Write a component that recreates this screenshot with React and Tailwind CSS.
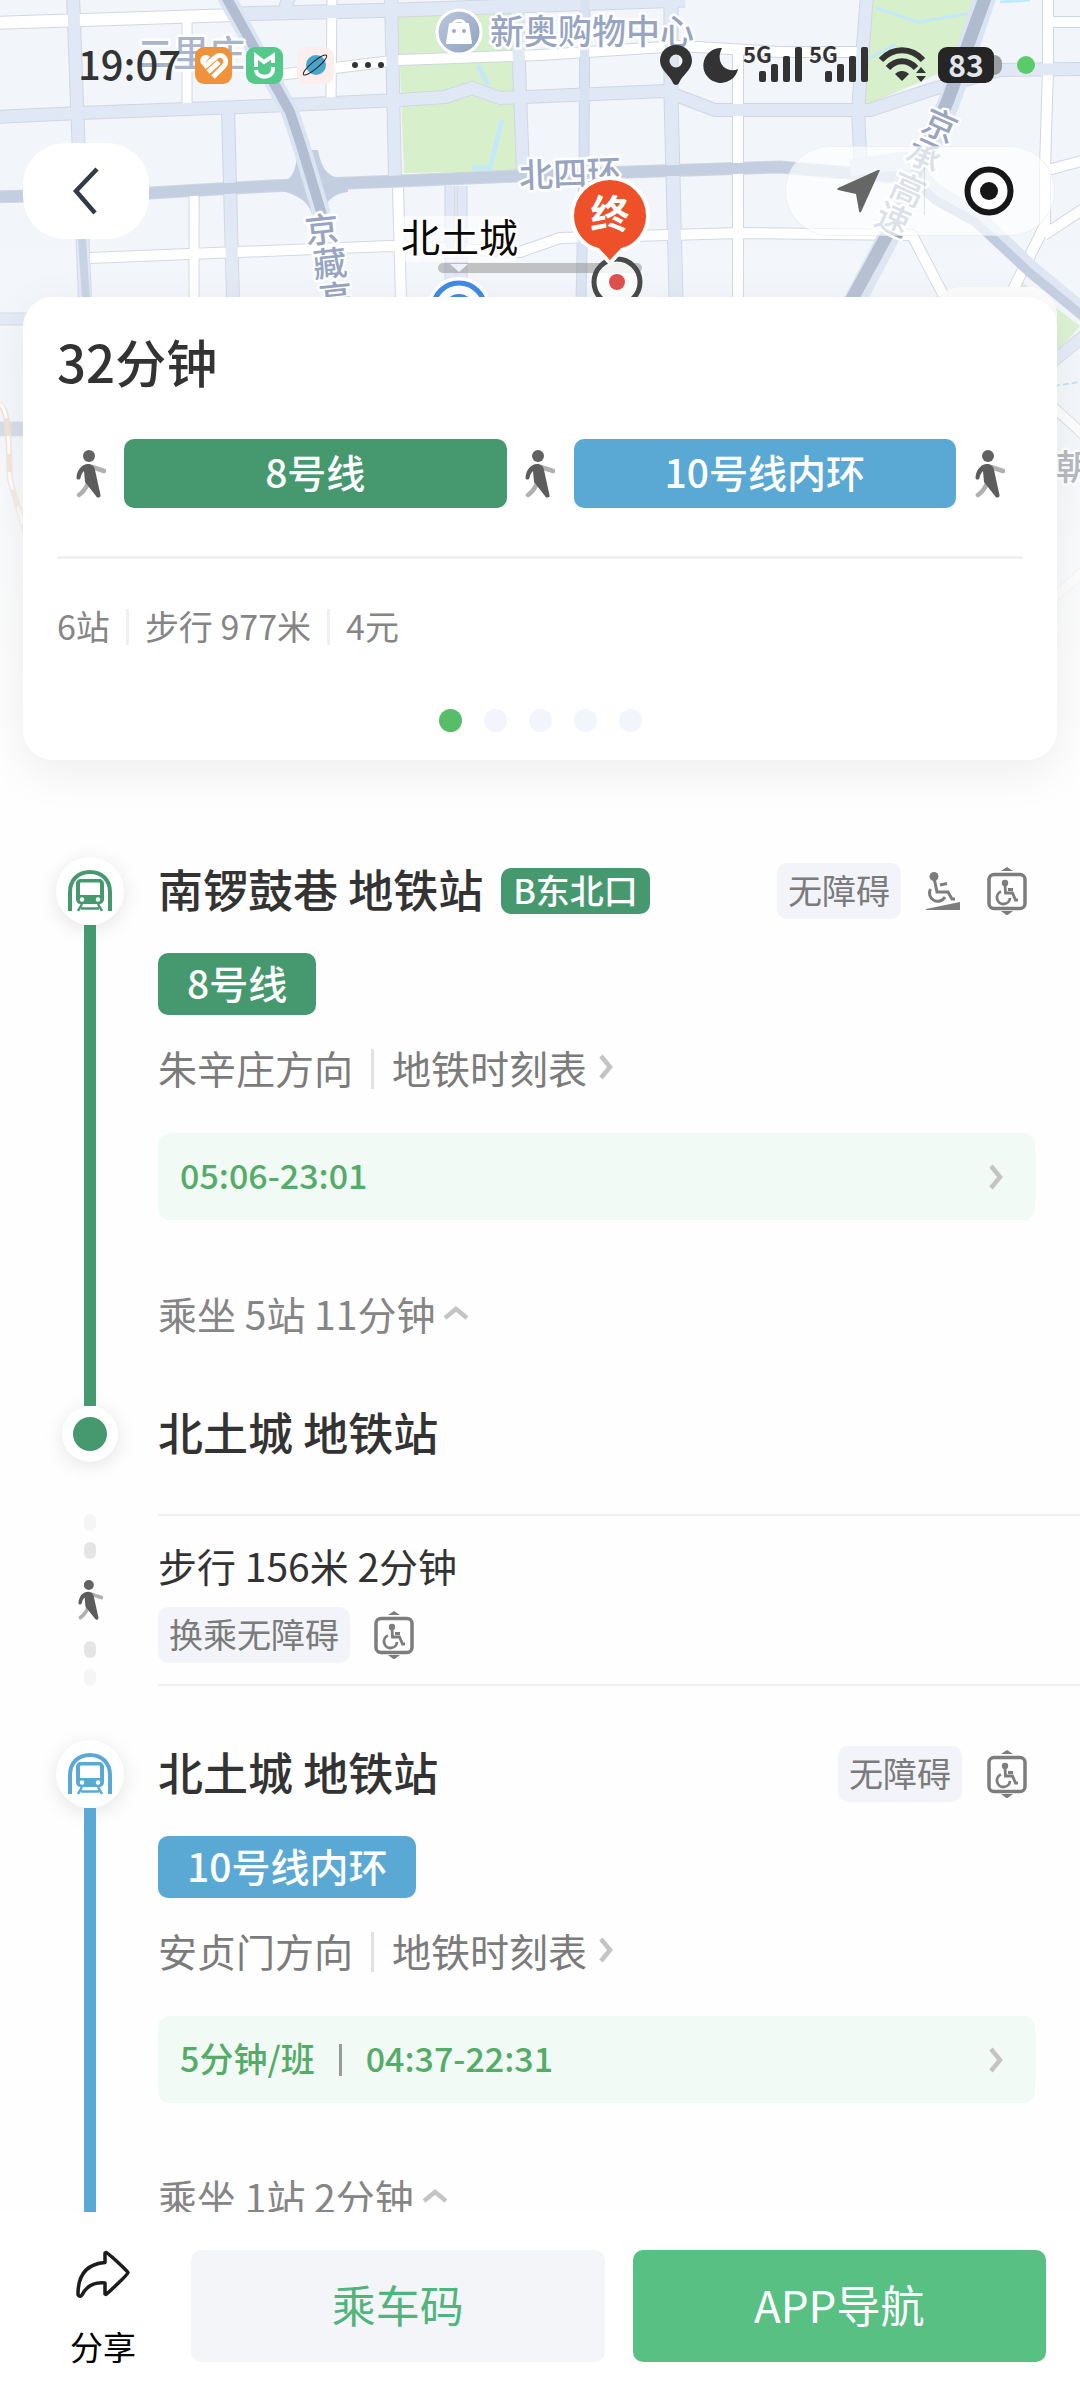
import clsx from "clsx";

const legs = [
    {
        id: "line-8",
        station: "南锣鼓巷 地铁站",
        exit: "B东北口",
        line: "8号线",
        direction: "朱辛庄方向",
        hours: "05:06-23:01",
        ride: "乘坐 5站 11分钟",
        ramp: true,
        endStation: "北土城 地铁站",
        bg: "bg-[#46996f]",
        text: "text-[#46996f]",
    },
    {
        id: "line-10",
        station: "北土城 地铁站",
        line: "10号线内环",
        direction: "安贞门方向",
        interval: "5分钟/班",
        hours: "04:37-22:31",
        ride: "乘坐 1站 2分钟",
        bg: "bg-[#5aa9d4]",
        text: "text-[#5aa9d4]",
    },
];

const minor = "#ffffff";
const major = "#e0e8f5";

const roads = [
    { d: "M-5 23L235 15", color: minor, width: 12 },
    { d: "M187 20V108", color: minor, width: 9 },
    { d: "M270 76L400 60L540 55L680 46L780 52L865 52", color: minor, width: 10 },
    { d: "M332 0L331 100", color: minor, width: 9 },
    { d: "M194 194V300", color: minor, width: 9 },
    { d: "M398 188L401 300", color: minor, width: 10 },
    { d: "M90 258L390 246L520 252L560 238L740 233L912 235L946 300", color: minor, width: 10 },
    { d: "M738 50L738 300", color: minor, width: 10 },
    { d: "M1048 -5V70L1045 168V225L1008 300", color: minor, width: 10 },
    { d: "M1050 22H1085M1048 170L1085 160M1044 235L1085 208", color: minor, width: 10 },
    { d: "M1030 386L1085 436M1040 610L1085 570", color: minor, width: 9 },
    { d: "M238 14L400 10L685 0", color: major, width: 13 },
    { d: "M-5 117L80 113L240 107L400 100L445 97L472 88L500 98L665 91L715 110L870 110L930 90L1000 70L1085 69", color: major, width: 12 },
    { d: "M73 -5L78 130L85 300", color: major, width: 12 },
    { d: "M228 108L233 300", color: major, width: 12 },
    { d: "M290 -5L285 8M391 -5L395 176", color: major, width: 12 },
    { d: "M517 8L523 175", color: major, width: 12 },
    { d: "M450 186V300M462 186V300", color: major, width: 9 },
    { d: "M585 -5L584 160L581 300", color: "#d8e2f2", width: 9 },
    { d: "M671 -5L671 95L676 300", color: major, width: 13 },
    { d: "M867 -5L858 110L861 172", color: major, width: 12 },
    { d: "M-5 319H30M1040 372L1085 335", color: "#dfe8f6", width: 11 },
    { d: "M-5 429H30", color: "#c8d2e4", width: 13 },
    { d: "M-5 197L150 193L270 186L400 181L540 175L780 167L905 178", color: "#c4cee1", width: 11 },
];

function MapBackdrop() {
    return <svg className="absolute inset-x-0 top-0 h-[720px] w-full" viewBox="0 0 1080 720" preserveAspectRatio="xMidYMin slice" fill="none" strokeLinejoin="round" aria-hidden="true">
        <defs>
            <linearGradient id="fade" x1="0" y1="0" x2="0" y2="1">
                <stop offset="0.28" stopColor="#fdfdfd" stopOpacity="0" />
                <stop offset="0.6" stopColor="#fdfdfd" stopOpacity="0.3" />
                <stop offset="0.76" stopColor="#fdfdfd" stopOpacity="0.75" />
                <stop offset="0.95" stopColor="#fdfdfd" />
            </linearGradient>
            <linearGradient id="poi" x1="0" y1="0" x2="1" y2="1">
                <stop stopColor="#bcc9dd" />
                <stop offset="1" stopColor="#8fa1be" />
            </linearGradient>
        </defs>
        <rect width="1080" height="720" fill="#f2f6fb" />

        {/* parks and water */}
        <path d="M398 15L512 10L517 171L404 173Z" fill="#d7efcb" />
        <path d="M870 0H978L968 60L920 82L864 106Z" fill="#d7efcb" />
        <path d="M1012 300L1022 282L1080 326L1054 356Z" fill="#d7efcb" />
        <path d="M478 65L488 85M502 120L490 168L472 168" stroke="#c3e9f8" strokeWidth="5" />
        <path d="M876 8L918 22L978 12M862 62L896 44M1000 2L1030 0" stroke="#c3e9f8" strokeWidth="3" />

        {/* all casings first, so that crossings stay open */}
        {roads.map((r) => <path key={r.d} d={r.d} stroke="#d0d6e1" strokeWidth={r.width + 2} />)}
        {roads.map((r) => <path key={r.d} d={r.d} stroke={r.color} strokeWidth={r.width} />)}
        <path d="M82 238L86 300" stroke="#c3cfe3" strokeWidth="8" />

        {/* interchange and expressways */}
        <path d="M272 188C292 182 298 170 296 150L318 150C322 172 330 178 348 180V192C332 194 326 202 322 214H312C308 200 296 194 272 188Z" fill="#c4cee1" />
        <path d="M225 -5L290 112L301 145L322 215" stroke="#dbe4f2" strokeWidth="18" />
        <path d="M225 -5L290 112L301 145L322 215" stroke="#b2bdd1" strokeWidth="10" />
        <path d="M850 168L905 160L935 192L975 215L1030 268L1090 318" stroke="#dbe4f2" strokeWidth="17" />
        <path d="M905 172L935 200L975 222L1030 273L1090 322" stroke="#bdc9de" strokeWidth="9" />
        <path d="M986 -5L950 100L900 215L850 310" stroke="#dbe4f2" strokeWidth="22" />
        <path d="M986 -5L948 100L898 215L846 310" stroke="#b0bbcd" strokeWidth="13" />
        <path d="M-2 403C10 408 8 440 10 480L26 535" stroke="#eed9c8" strokeWidth="6" />
        <path d="M-2 403C10 408 8 440 10 480L26 535" stroke="#fff" strokeWidth="3" strokeDasharray="18 18" />
        <path d="M1054 386L1080 382" stroke="#b7dcf2" strokeWidth="2" strokeDasharray="6 3" />

        <rect width="1080" height="720" fill="url(#fade)" />

        <circle cx="459" cy="32" r="22" fill="url(#poi)" stroke="#fff" strokeWidth="3" />
        <path d="M450 24H468L471 43H447Z" fill="#fff" stroke="#fff" strokeWidth="2" />
        <path d="M453 25C453 19 465 19 465 25" stroke="#fff" strokeWidth="3" />
        <circle cx="454" cy="31" r="2" fill="#9badc8" />
        <circle cx="464" cy="31" r="2" fill="#9badc8" />

        <g fill="#98a5c2" stroke="#fff" strokeWidth="5" style={{ paintOrder: "stroke" }} fontSize="34" fontWeight="500">
            <text x="490" y="44">新奥购物中心</text>
            <text x="137" y="67" fill="#a9b4cd" fontSize="36">二里庄</text>
            <text x="519" y="186" transform="rotate(-2 570 175)">北四环</text>
            <g fontSize="34" textAnchor="middle">
                <text x="322" y="242" transform="rotate(-6 322 230)">京</text>
                <text x="330" y="276" transform="rotate(-6 330 264)">藏</text>
                <text x="336" y="310" transform="rotate(-6 336 298)">高</text>
                <text x="940" y="138" transform="rotate(24 940 126)">京</text>
                <text x="924" y="168" transform="rotate(24 924 156)">承</text>
                <text x="908" y="202" transform="rotate(24 908 190)">高</text>
                <text x="893" y="232" transform="rotate(24 893 220)">速</text>
            </g>
            <text x="1056" y="480" fill="#b7bac3" fontSize="35">朝</text>
        </g>

        {/* route endpoints */}
        <path d="M443 268H637" stroke="#8b8b8b" strokeOpacity="0.5" strokeWidth="10" strokeLinecap="round" />
        <rect x="400" y="216" width="118" height="46" rx="8" fill="#fff" fillOpacity="0.6" />
        <text x="401" y="252" fontSize="39" fill="#0a0a0a" stroke="#fff" strokeWidth="5" style={{ paintOrder: "stroke" }}>北土城</text>
        <path d="M450 264L459 272L468 264Z" fill="#eef2f8" />
        <circle cx="459" cy="309" r="27" fill="#fff" stroke="#fff" strokeWidth="10" />
        <circle cx="459" cy="309" r="26" stroke="#428ae6" strokeWidth="5" />
        <circle cx="459" cy="309" r="15" fill="#428ae6" />
        <circle cx="617" cy="282" r="23" fill="#fff" fillOpacity="0.8" stroke="#4a4a4a" strokeWidth="5" />
        <circle cx="617" cy="282" r="8" fill="#df504e" />
        <path d="M610 263L598 250C582 246 572 231 572 216C572 195 589 178 610 178S648 195 648 216C648 231 638 246 622 250Z" fill="#ee5029" stroke="#fff" strokeWidth="4" />
        <text x="610" y="228" fontSize="39" fontWeight="700" fill="#fff" textAnchor="middle">终</text>
    </svg>
}

function SignalIcon() {
    return <div className="relative flex h-9 w-[59px] items-end justify-end">
        <span className="absolute -top-1 left-0 text-[22px]/5 font-bold">5G</span>
        <svg className="h-9 w-11" viewBox="0 0 44 36" fill="currentColor">
            <rect x="1" y="24" width="7" height="11" rx="2" />
            <rect x="13" y="17" width="7" height="18" rx="2" />
            <rect x="25" y="9" width="7" height="26" rx="2" />
            <rect x="37" y="0" width="7" height="35" rx="2" />
        </svg>
    </div>
}

function StatusBar() {
    return <div className="flex h-[130px] items-center justify-between pr-[45px] pl-[78px] text-[#333]">
        <div className="flex items-center gap-[14px]">
            <span className="pb-1 text-[40px]/10 font-medium">19:07</span>
            <svg className="size-[37px]" viewBox="0 0 37 37" fill="none" stroke="#fff" strokeWidth="5">
                <rect width="37" height="37" rx="9" fill="#f0923c" stroke="none" />
                <path d="M6 17C3 10 10 5 15 10L8 18Z" fill="#fff" stroke="none" />
                <path d="M9 20L21 10C27 5 34 13 29 19L18 30M13 25L24 15" />
            </svg>
            <svg className="size-[37px]" viewBox="0 0 37 37" fill="none" stroke="#fff" strokeWidth="4">
                <rect width="37" height="37" rx="9" fill="#53c98b" stroke="none" />
                <path d="M10 20V9L18 15L27 9V16M27 20V22C27 32 11 32 10 23" />
            </svg>
            <svg className="size-[37px]" viewBox="0 0 37 37" fill="none">
                <rect width="37" height="37" rx="9" fill="#fbeeec" />
                <circle cx="19" cy="18" r="10" fill="#4aa5cb" />
                <ellipse cx="18" cy="18" rx="15" ry="3.500" stroke="#222" transform="rotate(-40 18 18)" />
            </svg>
            <svg className="ml-1 h-2 w-8" viewBox="0 0 32 8" fill="#333">
                <circle cx="3" cy="4" r="3" />
                <circle cx="16" cy="4" r="3" />
                <circle cx="29" cy="4" r="3" />
            </svg>
        </div>
        <div className="flex items-center gap-[11px]">
            <svg className="h-10 w-8" viewBox="0 0 32 40" fill="currentColor">
                <path fillRule="evenodd" d="M16 0C7 0 0 7 0 15.500C0 25 9 29 13 38C14 40.500 18 40.500 19 38C23 29 32 25 32 15.500C32 7 25 0 16 0ZM16 9.500A6.500 6.500 0 1 1 16 22.500A6.500 6.500 0 1 1 16 9.500Z" />
            </svg>
            <svg className="size-9" viewBox="0 0 36 36" fill="currentColor">
                <path d="M19 1A17.500 17.500 0 1 0 35 22C25 27 11 17 19 1Z" />
            </svg>
            <div className="-ml-[7px] flex gap-[7px]">
                <SignalIcon />
                <SignalIcon />
            </div>
            <svg className="h-9 w-12" viewBox="0 0 48 36" fill="none" stroke="currentColor" strokeWidth="6">
                <path d="M2 13C14 0 32 0 44 13M9 21C17 12 29 12 37 21" />
                <path d="M16 27C20 23 26 23 30 27L23 34Z" fill="currentColor" stroke="none" />
                <path d="M42 20L47 26H37ZM42 35L47 29H37Z" fill="currentColor" stroke="none" />
            </svg>
            <div className="mr-1 flex items-center">
                <span className="flex h-9 w-14 items-center justify-center rounded-[9px] bg-[#252525] pb-[2px] text-[30px]/8 font-bold text-[#e2e6ed]">83</span>
                <span className="h-5 w-2 rounded-r-lg bg-[#9a9da3]" />
            </div>
            <span className="size-[18px] rounded-full bg-[#59cb69]" />
        </div>
    </div>
}

function WalkIcon({ className }) {
    return <svg className={className} viewBox="0 0 30 48" fill="none">
        <path d="M16 17L28 21" stroke="#b0b0b0" strokeWidth="4.500" strokeLinecap="round" />
        <path d="M12 33C10 39 7 42 3 45" stroke="#b0b0b0" strokeWidth="4.500" strokeLinecap="round" />
        <circle cx="13" cy="6" r="6" fill="#626262" />
        <path d="M8 15C4 17 1 21 .500 28C1 30 4 30 4.500 28C5 25 6 23 8 21L9 32L20 46C21 48.500 25 48 24.500 45L19 20C18 14 12 13 8 15Z" fill="#5c5c5c" />
    </svg>
}

function TrainIcon({ className }) {
    return <svg className={clsx("h-[42px] w-11", className)} viewBox="0 0 44 42" fill="none" stroke="currentColor">
        <path d="M2 41V22C2 10 10 2 22 2S42 10 42 22V41" strokeWidth="4" />
        <path fill="currentColor" stroke="none" fillRule="evenodd" d="M13 9H31C34 9 36 11 36 14V29C36 32 34 34 31 34H13C10 34 8 32 8 29V14C8 11 10 9 13 9ZM12 14V25H32V14C32 13 31.500 12.500 31 12.500H13C12.500 12.500 12 13 12 14Z" />
        <circle cx="14" cy="29.500" r="2.200" fill="#fff" stroke="none" />
        <circle cx="30" cy="29.500" r="2.200" fill="#fff" stroke="none" />
        <path d="M14 34L10 41M30 34L34 41M13 38.500H31" strokeWidth="2.500" />
    </svg>
}

function ElevatorIcon() {
    return <svg className="h-12 w-10" viewBox="0 0 40 48" fill="none" stroke="#7d7d7d" role="img" aria-label="无障碍电梯">
        <path d="M14 4L20 0L26 4ZM14 44H26L20 48.500Z" fill="#7d7d7d" stroke="none" />
        <rect x="2" y="7.500" width="36" height="34" rx="5" strokeWidth="3.500" />
        <circle cx="18" cy="16" r="3.200" fill="#7d7d7d" stroke="none" />
        <path d="M18 18L18.500 26H25.500L28.500 33H31M21 22.500H26M14 24.500A6.500 6.500 0 1 0 23 31" strokeWidth="2.800" />
    </svg>
}

function RampIcon() {
    return <svg className="h-[38px] w-9" viewBox="0 0 36 38" fill="none" stroke="#7d7d7d" role="img" aria-label="无障碍坡道">
        <circle cx="8" cy="4.500" r="4.500" fill="#7d7d7d" stroke="none" />
        <path d="M8.500 8L11 20H22L26 27H29M14 13L21 11.500" strokeWidth="3" />
        <path d="M4.500 17A8 8 0 1 0 19 25" strokeWidth="3" />
        <path d="M0 37L34 30V38H0Z" fill="#7d7d7d" stroke="none" />
    </svg>
}

function Chevron({ up }) {
    return <svg className={clsx("shrink-0", up ? "h-[14px] w-[26px]" : "h-[26px] w-[14px]")} viewBox={up ? "0 0 26 14" : "0 0 14 26"} fill="none" stroke="#c4c4c4" strokeWidth="4.500">
        <path d={up ? "M2 12L13 3L24 12" : "M2 2L11 13L2 24"} />
    </svg>
}

function Pill({ children }) {
    return <span className="flex h-14 items-center rounded-[10px] bg-[#f2f4f9] px-[11px] pb-1 text-[34px] text-[#7b7b7b]">{children}</span>
}

function RouteCard() {
    return <section className="relative mx-[23px] mt-[58px]">
        <div className="absolute -top-[10px] right-0 h-20 w-[124px] rounded-[28px] bg-[#fcfcfd]" />
        <div className="relative flex flex-col rounded-[30px] bg-white px-[34px] pt-8 pb-7 shadow-[0_12px_48px_rgba(0,0,0,0.07)]">
            <h1 className="text-[51px]/[64px] font-medium text-[#333]">32分钟</h1>
            <div className="mt-[46px] flex items-center">
                <div className="flex w-[67px] justify-center"><WalkIcon className="h-12 w-[30px]" /></div>
                {legs.map((leg) => (
                    <div key={leg.id} className="flex flex-1 items-center">
                        <div className={clsx("flex h-[69px] flex-1 items-center justify-center rounded-[10px] pb-1 text-[39px] font-medium text-white", leg.bg)}>{leg.line}</div>
                        <div className="flex w-[67px] justify-center"><WalkIcon className="h-12 w-[30px]" /></div>
                    </div>
                ))}
            </div>
            <hr className="mt-12 border-t-[3px] border-[#f1f1f1]" />
            <div className="mt-[42px] flex h-[52px] items-center gap-4 text-[34px] text-[#858585]">
                <span className="pb-1">6站</span>
                <span className="h-9 w-[3px] bg-[#efefef]" />
                <span className="pb-1">步行 977米</span>
                <span className="h-9 w-[3px] bg-[#efefef]" />
                <span className="pb-1">4元</span>
            </div>
            <div className="mt-14 flex justify-center gap-[22px]">
                {[0, 1, 2, 3, 4].map((i) => (
                    <span key={i} className={clsx("size-[23px] rounded-full", i === 0 ? "bg-[#57bd69]" : "bg-[#f2f5fb]")} />
                ))}
            </div>
        </div>
    </section>
}

function Leg({ leg }) {
    return <section className="flex gap-[34px] pr-[45px] pl-14">
        <div className="flex w-[68px] shrink-0 flex-col items-center">
            <span className="flex size-[68px] items-center justify-center rounded-full bg-white shadow-[0_4px_20px_rgba(0,0,0,0.1)]">
                <TrainIcon className={leg.text} />
            </span>
            <span className={clsx("relative w-3 flex-1", leg.bg)} />
            {leg.endStation &&
                <span className="flex size-14 items-center justify-center rounded-full bg-white shadow-[0_4px_20px_rgba(0,0,0,0.1)]">
                    <span className={clsx("size-[34px] rounded-full", leg.bg)} />
                </span>
            }
        </div>
        <div className="flex flex-1 flex-col items-start">
            <div className="flex h-[68px] w-full items-center pr-2">
                <h2 className="pb-1 text-[45px] font-medium text-[#333]">{leg.station}</h2>
                {leg.exit &&
                    <span className={clsx("ml-[18px] flex h-[46px] items-center rounded-[10px] px-3 pb-1 text-[34px] font-medium text-white", leg.bg)}>{leg.exit}</span>
                }
                <div className="ml-auto flex items-center gap-[25px]">
                    <Pill>无障碍</Pill>
                    {leg.ramp && <RampIcon />}
                    <ElevatorIcon />
                </div>
            </div>
            <span className={clsx("mt-7 flex h-[62px] items-center rounded-[10px] px-[29px] pb-1 text-[39px] font-medium text-white", leg.bg)}>{leg.line}</span>
            <div className="mt-7 flex h-[52px] items-center text-[39px] text-[#7b7b7b]">
                <span className="pb-1">{leg.direction}</span>
                <span className="mx-[18px] h-10 w-[3px] bg-[#e2e2e2]" />
                <a href="#timetable" className="flex items-center gap-3 pb-1">地铁时刻表 <Chevron /></a>
            </div>
            <button className="mt-[38px] flex h-[87px] w-full items-center justify-between rounded-xl bg-[#f1faf5] pr-8 pl-[22px] text-[34px] font-medium text-[#55ac69]">
                <span className="flex items-center gap-6">
                    {leg.interval && <>
                        <span className="pb-1">{leg.interval}</span>
                        <span className="h-8 w-[3px] bg-[#999]" />
                    </>}
                    <span className="pb-1">{leg.hours}</span>
                </span>
                <Chevron />
            </button>
            <button className="mt-[69px] flex h-[52px] items-center gap-2 pb-1 text-[39px] text-[#858585]">{leg.ride} <Chevron up /></button>
            {leg.endStation &&
                <h2 className="mt-[65px] flex h-14 items-center pb-1 text-[45px] font-medium text-[#333]">{leg.endStation}</h2>
            }
        </div>
    </section>
}

function Transfer() {
    return <section className="mt-[52px] mb-[54px] flex gap-[34px] pl-14">
        <div className="flex w-[68px] shrink-0 flex-col items-center justify-between">
            <div className="flex flex-col gap-[11px]">
                <span className="h-[17px] w-3 rounded-full bg-[#f5f5f5]" />
                <span className="h-[17px] w-3 rounded-full bg-[#e5e5e5]" />
            </div>
            <WalkIcon className="h-10 w-[25px]" />
            <div className="flex flex-col gap-[11px]">
                <span className="h-[17px] w-3 rounded-full bg-[#e5e5e5]" />
                <span className="h-[17px] w-3 rounded-full bg-[#f5f5f5]" />
            </div>
        </div>
        <div className="flex-1 border-y-2 border-[#f1f1f1] pt-[23px] pb-[21px]">
            <p className="text-[39px]/[52px] text-[#333]">步行 156米 2分钟</p>
            <div className="mt-4 flex items-center gap-6">
                <Pill>换乘无障碍</Pill>
                <ElevatorIcon />
            </div>
        </div>
    </section>
}

function BottomBar() {
    return <footer className="flex shrink-0 items-center bg-white pt-[38px] pr-[34px] pb-[38px] pl-[15px]">
        <button className="flex w-44 flex-col items-center gap-8 text-[33px]/8 text-black">
            <svg className="h-12 w-[54px]" viewBox="0 0 54 48" fill="none" stroke="#1c1c1c" strokeWidth="3.500" strokeLinejoin="round">
                <path d="M30 2.500C32 2.500 50 20 52 22.500C52 24.500 33 42 30 44.500L29 44V33C18 32 10 37 6 45C5 47 2 46 2 44C2 26 10 14 29 12.500V3Z" />
            </svg>
            分享
        </button>
        <div className="flex flex-1 gap-7">
            <button className="h-28 flex-1 rounded-[10px] bg-[#f4f5f8] pb-1 text-[44px] text-[#52b47d]">乘车码</button>
            <button className="h-28 flex-1 rounded-[10px] bg-[#58c083] pb-1 text-[44px] text-white">APP导航</button>
        </div>
    </footer>
}

export default function App() {
    return <div className="flex h-screen flex-col bg-[#fefefe] font-['Noto_Sans_CJK_SC',sans-serif]">
        <main className="relative flex-1 overflow-x-hidden overflow-y-auto [scrollbar-width:none]">
            <MapBackdrop />
            <div className="relative">
                <StatusBar />
                <nav className="flex items-center justify-between pt-[13px] pr-[25px] pl-[23px]">
                    <button className="flex h-24 w-[126px] items-center justify-center rounded-[42px] bg-white" aria-label="返回">
                        <svg className="h-12 w-7" viewBox="0 0 28 48" fill="none" stroke="#333b47" strokeWidth="4.500">
                            <path d="M25 2L4 24L23 46" />
                        </svg>
                    </button>
                    <div className="flex h-[90px] w-[270px] items-center rounded-full border border-black/5 bg-white/65">
                        <button className="flex flex-1 justify-center pl-2" aria-label="定位">
                            <svg className="size-[43px]" viewBox="0 0 43 43" fill="#666">
                                <path d="M43 0L24 42C23 43 22 42 22 41L19 24L1 20C0 20 0 19 1 18L41 0Z" />
                            </svg>
                        </button>
                        <span className="h-12 w-px bg-black/10" />
                        <button className="flex flex-1 justify-center" aria-label="关闭">
                            <svg className="size-[50px]" viewBox="0 0 50 50" fill="none">
                                <circle cx="25" cy="25" r="21.500" fill="#fff" stroke="#171717" strokeWidth="6" />
                                <circle cx="25" cy="25" r="9" fill="#171717" />
                            </svg>
                        </button>
                    </div>
                </nav>
                <RouteCard />
                <div className="pt-[97px] pb-16">
                    <Leg leg={legs[0]} />
                    <Transfer />
                    <Leg leg={legs[1]} />
                </div>
            </div>
        </main>
        <BottomBar />
    </div>
}
